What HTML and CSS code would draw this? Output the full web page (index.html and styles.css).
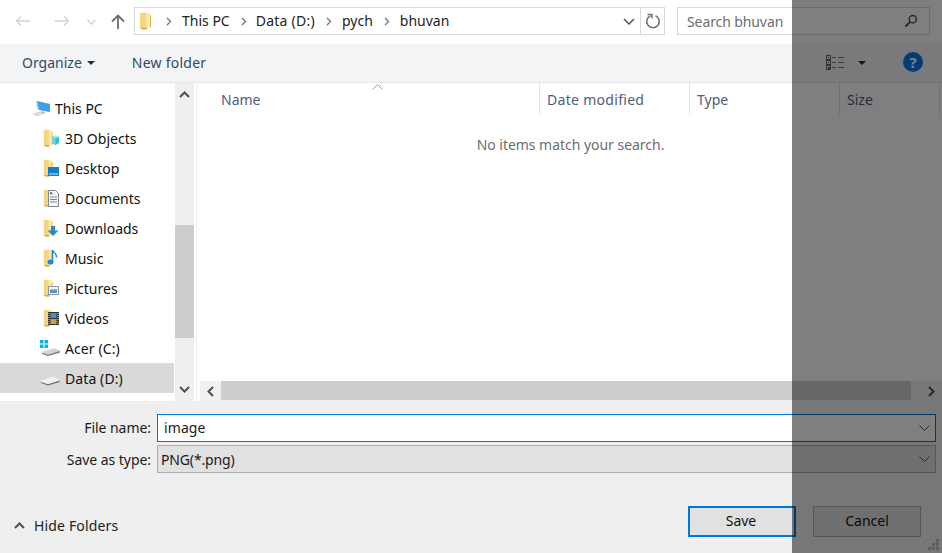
FILE: index.html
```html
<!DOCTYPE html>
<html lang="en">
<head>
<meta charset="utf-8">
<title>Save As</title>
<link rel="stylesheet" href="styles.css">
</head>
<body>
<svg class="defs" width="0" height="0">
  <defs>
    <g id="folder">
      <path d="M1 1h6l1 2v19H3l-2-2z" fill="#f5d67e"/>
      <path d="M7 1h3l2 3v16H7z" fill="#fbe7a6"/>
      <path d="M1 20l2 2h5v-2z" fill="#d8a93f"/>
      <path d="M12 4v15h-1V4z" fill="#e2b752"/>
    </g>
  </defs>
</svg>
<div class="dialog">
  <div class="topbar">
    <svg class="navicon back" width="16" height="12" viewBox="0 0 16 12"><path d="M15 6H2M6 1.500 1.500 6 6 10.500" fill="none" stroke="#d3d3d3" stroke-width="1.400"/></svg>
    <svg class="navicon forward" width="16" height="12" viewBox="0 0 16 12"><path d="M1 6h13M10 1.500 14.500 6 10 10.500" fill="none" stroke="#d3d3d3" stroke-width="1.400"/></svg>
    <svg class="navicon down" width="9" height="6" viewBox="0 0 9 6"><path d="M.5 1l4 4 4-4" fill="none" stroke="#d3d3d3" stroke-width="1.300"/></svg>
    <svg class="navicon up" width="14" height="15" viewBox="0 0 14 15"><path d="M7 15V2M1 7.500 7 1.500l6 6" fill="none" stroke="#6d6d6d" stroke-width="1.800"/></svg>
    <div class="address">
      <svg class="crumb-folder" width="13" height="18" viewBox="0 0 13 23" preserveAspectRatio="none"><use href="#folder"/></svg>
      <div class="crumbs">
        <svg class="sep" width="6" height="9" viewBox="0 0 6 9"><path d="M1 1l3.500 3.500L1 8" fill="none" stroke="#777" stroke-width="1.400"/></svg>
        <span>This PC</span>
        <svg class="sep" width="6" height="9" viewBox="0 0 6 9"><path d="M1 1l3.500 3.500L1 8" fill="none" stroke="#777" stroke-width="1.400"/></svg>
        <span>Data (D:)</span>
        <svg class="sep" width="6" height="9" viewBox="0 0 6 9"><path d="M1 1l3.500 3.500L1 8" fill="none" stroke="#777" stroke-width="1.400"/></svg>
        <span>pych</span>
        <svg class="sep" width="6" height="9" viewBox="0 0 6 9"><path d="M1 1l3.500 3.500L1 8" fill="none" stroke="#777" stroke-width="1.400"/></svg>
        <span>bhuvan</span>
      </div>
      <svg class="addr-drop" width="12" height="7" viewBox="0 0 12 7"><path d="M1 1l5 5 5-5" fill="none" stroke="#555" stroke-width="1.500"/></svg>
      <div class="refresh">
        <svg width="16" height="16" viewBox="0 0 16 16"><path d="M5.500 2.700A6.300 6.300 0 1 0 10.500 2.700" fill="none" stroke="#757575" stroke-width="1.600"/><path d="M2.500 1.500h4.500v4" fill="none" stroke="#757575" stroke-width="1.500"/></svg>
      </div>
    </div>
    <div class="search">
      <span class="search-text">Search bhuvan</span>
      <svg width="14" height="14" viewBox="0 0 14 14"><circle cx="8.800" cy="5.200" r="3.600" fill="none" stroke="#555" stroke-width="1.500"/><path d="M6 8 1.500 12.500" stroke="#555" stroke-width="2.200"/></svg>
    </div>
  </div>

  <div class="toolbar">
    <button class="tool organize">Organize<span class="caret"></span></button>
    <button class="tool newfolder">New folder</button>
    <div class="tool-right">
      <svg class="views" width="19" height="15" viewBox="0 0 19 15">
        <g fill="#f2f2f2" stroke="#666"><rect x=".5" y=".5" width="4" height="4"/><rect x=".5" y="5.500" width="4" height="4"/><rect x=".5" y="10.500" width="4" height="4"/></g>
        <rect x="2" y="12" width="2" height="2" fill="#c0392b"/>
        <rect x="2" y="2" width="1" height="1" fill="#444"/><rect x="2" y="7" width="1" height="1" fill="#444"/>
        <path d="M6 2.500h4M12 2.500h6M6 7.500h4M12 7.500h6M6 12.500h4M12 12.500h6" stroke="#777"/>
      </svg>
      <span class="caret views-caret"></span>
      <span class="help">?</span>
    </div>
  </div>

  <div class="main">
    <nav class="tree">
      <div class="tree-list">
        <div class="row level0">
          <svg class="icon pc" width="20" height="17" viewBox="0 0 20 17">
            <path d="M6 1l13 3v8L8 10z" fill="#3aa0e8"/><path d="M6 1 8 10l-1.500-.5L5 1.500z" fill="#8cc9ef"/>
            <path d="M1 13.500l9-2 3 2-7 3z" fill="#d9d9d9"/><path d="M10 11l4 1v1.500l-3 0z" fill="#bdbdbd"/>
          </svg>
          <span>This PC</span>
        </div>
        <div class="row level1">
          <svg class="icon" width="16" height="18" viewBox="0 0 16 18"><g transform="scale(.8)"><use href="#folder"/></g><path d="M9 8l3.500-1.500L16 8v6l-3.500 2L9 14z" fill="#39bcd0"/><path d="M9 8l3.500 1.500L16 8l-3.500-1.500z" fill="#a8e8ef"/><path d="M12.500 9.500V16L9 14V8z" fill="#6fd5e2"/></svg>
          <span>3D Objects</span>
        </div>
        <div class="row level1">
          <svg class="icon" width="16" height="18" viewBox="0 0 16 18"><g transform="scale(.8)"><use href="#folder"/></g><rect x="5" y="8" width="11" height="9" fill="#0f7fd1"/><path d="M6 14.500h9v1H6z" fill="#bfe3f8"/></svg>
          <span>Desktop</span>
        </div>
        <div class="row level1">
          <svg class="icon" width="16" height="18" viewBox="0 0 16 18"><g transform="scale(.8)"><use href="#folder"/></g><path d="M5.500 1.500h7l3 3v13h-10z" fill="#f7f7f7" stroke="#7b8894"/><path d="M7 5h3M7 8h7M7 10.500h7M7 13h7" stroke="#7b8894"/><rect x="7" y="3" width="2" height="2" fill="#3b8ec9"/></svg>
          <span>Documents</span>
        </div>
        <div class="row level1">
          <svg class="icon" width="16" height="18" viewBox="0 0 16 18"><g transform="scale(.8)"><use href="#folder"/></g><path d="M8 7h4v4.500h3.500L10 17 4.500 11.500H8z" fill="#2d88d4"/></svg>
          <span>Downloads</span>
        </div>
        <div class="row level1">
          <svg class="icon" width="16" height="18" viewBox="0 0 16 18"><g transform="scale(.8)"><use href="#folder"/></g><path d="M9.500 1v11.500" stroke="#1c8ce0" stroke-width="1.600"/><ellipse cx="7.500" cy="13" rx="3" ry="2.500" fill="#1c8ce0"/><path d="M9.500 1c1 3 4.500 3.500 4 7.500" fill="none" stroke="#1c8ce0" stroke-width="1.400"/></svg>
          <span>Music</span>
        </div>
        <div class="row level1">
          <svg class="icon" width="16" height="18" viewBox="0 0 16 18"><g transform="scale(.8)"><use href="#folder"/></g><rect x="5.500" y="7.500" width="10" height="8" fill="#eef3f7" stroke="#8d9aa5"/><path d="M7 10.500h7v3.500H7z" fill="#5c97c4"/></svg>
          <span>Pictures</span>
        </div>
        <div class="row level1">
          <svg class="icon" width="16" height="18" viewBox="0 0 16 18"><g transform="scale(.8)"><use href="#folder"/></g><rect x="5" y="3" width="11" height="13" fill="#333"/><rect x="7.500" y="4" width="6" height="5" fill="#4d8fc4"/><rect x="7.500" y="10" width="6" height="5" fill="#c9a14a"/><path d="M6 4v11M15 4v11" stroke="#ddd" stroke-dasharray="1 1"/></svg>
          <span>Videos</span>
        </div>
        <div class="row level1 drive">
          <svg class="icon" width="20" height="16" viewBox="0 0 20 16"><path d="M0 0h3.500v3.500H0zM4.500 0H8v3.500H4.500zM0 4.500h3.500V8H0zM4.500 4.500H8V8H4.500z" fill="#0cb4ee"/><path d="M2 12l12-4 6 2.500v2L8 16l-6-2z" fill="#d4d4d4"/><path d="M2 13l6 1.800 12-3.800v1.500L8 16l-6-2z" fill="#7e7e7e"/></svg>
          <span>Acer (C:)</span>
        </div>
        <div class="row level1 drive selected">
          <svg class="icon" width="20" height="16" viewBox="0 0 20 16"><path d="M1 10.500l12-4 6.500 3v2L8 15.500l-7-2.500z" fill="#efefef"/><path d="M1 12l7 2.300 11.500-3.800v1.500L8 15.500 1 13z" fill="#6e6e6e"/></svg>
          <span>Data (D:)</span>
        </div>
      </div>
      <div class="vscroll">
        <button class="sb-btn"><svg width="11" height="7" viewBox="0 0 11 7"><path d="M1 6l4.500-4.500L10 6" fill="none" stroke="#505050" stroke-width="2"/></svg></button>
        <div class="v-track"><div class="v-thumb"></div></div>
        <button class="sb-btn"><svg width="11" height="7" viewBox="0 0 11 7"><path d="M1 1l4.500 4.500L10 1" fill="none" stroke="#505050" stroke-width="2"/></svg></button>
      </div>
    </nav>
    <section class="files">
      <div class="headers">
        <svg class="sort" width="11" height="6" viewBox="0 0 11 6"><path d="M.5 5.500l5-5 5 5" fill="none" stroke="#9a9a9a"/></svg>
        <div class="col col-name">Name</div>
        <div class="col col-mid col-date">Date modified</div>
        <div class="col col-mid">Type</div>
        <div class="col col-size">Size</div>
      </div>
      <div class="empty">No items match your search.</div>
      <div class="hscroll">
        <button class="sb-btn h"><svg width="7" height="11" viewBox="0 0 7 11"><path d="M6 1 1.500 5.500 6 10" fill="none" stroke="#505050" stroke-width="2"/></svg></button>
        <div class="h-thumb"></div>
        <button class="sb-btn h end"><svg width="7" height="11" viewBox="0 0 7 11"><path d="M1 1l4.500 4.500L1 10" fill="none" stroke="#505050" stroke-width="2"/></svg></button>
      </div>
    </section>
  </div>

  <div class="bottom">
    <div class="field-row first">
      <label class="field-label">File name:</label>
      <div class="field input-field"><span>image</span><svg width="11" height="6" viewBox="0 0 11 6"><path d="M.5.500l5 5 5-5" fill="none" stroke="#555"/></svg></div>
    </div>
    <div class="field-row">
      <label class="field-label">Save as type:</label>
      <div class="field select-field"><span>PNG(*.png)</span><svg width="11" height="6" viewBox="0 0 11 6"><path d="M.5.500l5 5 5-5" fill="none" stroke="#555"/></svg></div>
    </div>
    <div class="actions">
      <div class="hide-folders">
        <svg width="11" height="7" viewBox="0 0 11 7"><path d="M1 6l4.500-4.500L10 6" fill="none" stroke="#505050" stroke-width="2"/></svg>
        <span>Hide Folders</span>
      </div>
      <div class="buttons">
        <button class="btn primary">Save</button>
        <button class="btn">Cancel</button>
      </div>
    </div>
    <div class="grip"><svg width="12" height="12" viewBox="0 0 12 12"><path d="M8 0h3v3H8zM4 4h3v3H4zM8 4h3v3H8zM0 8h3v3H0zM4 8h3v3H4zM8 8h3v3H8z" fill="#bbb"/></svg></div>
  </div>

  <div class="shade"></div>
</div>
</body>
</html>
```
FILE: styles.css
```css
* { box-sizing: border-box; }
html, body { margin: 0; padding: 0; }
body { width: 942px; height: 553px; overflow: hidden; background: #fff; font-family: "Noto Sans", "Open Sans", sans-serif; font-size: 14px; color: #1a1a1a; }
.defs { position: absolute; }
button { font: inherit; color: inherit; background: none; border: 0; padding: 0; }
.dialog { position: relative; width: 942px; height: 553px; display: flex; flex-direction: column; overflow: hidden; }

.topbar { height: 44px; flex: none; display: flex; align-items: flex-start; padding-top: 7px; background: #fff; }
.navicon { flex: none; margin-top: 8px; }
.back { margin-left: 15px; }
.forward { margin-left: 23px; }
.down { margin-left: 17px; margin-top: 12px; }
.up { margin-left: 15px; margin-top: 7px; }
.address { margin-left: 9px; width: 531px; height: 28px; border: 1px solid #d9d9d9; display: flex; align-items: center; }
.crumb-folder { margin-left: 4px; flex: none; }
.crumbs { display: flex; align-items: center; margin-left: 14px; color: #222; flex: 1; }
.crumbs span { line-height: 20px; }
.crumbs span:nth-of-type(2) { letter-spacing: .25px; margin-left: -1px; }
.crumbs .sep { flex: none; margin: 0 10px 0 11px; }
.crumbs .sep:first-child { margin: 0 10px 0 0; }
.addr-drop { flex: none; margin-right: 5px; }
.refresh { width: 24px; height: 26px; border-left: 1px solid #d9d9d9; display: flex; align-items: center; justify-content: center; }
.search { margin-left: 12px; width: 253px; height: 28px; border: 1px solid #d9d9d9; display: flex; align-items: center; justify-content: space-between; padding: 0 11px 0 9px; color: #6d6d6d; }
.search-text { letter-spacing: -.1px; }

.toolbar { height: 39px; flex: none; display: flex; align-items: center; background: #f3f4f6; border-bottom: 1px solid #e6e6e6; color: #2e4a66; padding-left: 22px; padding-bottom: 1px; }
.organize { display: flex; align-items: center; }
.caret { display: inline-block; width: 0; height: 0; border-left: 4.500px solid transparent; border-right: 4.500px solid transparent; border-top: 4.500px solid #222c38; margin-left: 5px; }
.newfolder { margin-left: 37px; letter-spacing: .25px; }
.tool-right { margin-left: auto; display: flex; align-items: center; padding-right: 19px; }
.views-caret { margin-left: 13px; }
.help { width: 20px; height: 20px; margin-left: 37px; margin-top: -1px; border-radius: 50%; background: #0a78e6; color: #fff; font-weight: 700; font-size: 15px; line-height: 20px; text-align: center; }

.main { height: 318px; flex: none; display: flex; background: #fff; }
.tree { width: 197px; flex: none; display: flex; border-right: 1px solid #efefef; }
.tree-list { width: 174px; padding-top: 10px; flex: none; color: #111; }
.row { height: 30px; display: flex; align-items: center; }
.row.selected { background: #d9d9d9; }
.level0 { padding-left: 31px; }
.level0 span { margin-left: 4px; }
.level1 { padding-left: 43px; }
.level1 span { margin-left: 6px; }
.icon { flex: none; }
.drive { padding-left: 40px; }
.drive span { margin-left: 5px; letter-spacing: .1px; }
.vscroll { width: 19px; margin-left: 1px; display: flex; flex-direction: column; background: #efefef; }
.sb-btn { height: 23px; flex: none; width: 100%; display: flex; align-items: center; justify-content: center; }
.v-track { flex: 1; padding-top: 119px; padding-bottom: 40px; display: flex; }
.v-thumb { flex: 1; background: #cdcdcd; }

.files { flex: 1; min-width: 0; margin-left: 3px; position: relative; display: flex; flex-direction: column; }
.headers { height: 32px; flex: none; display: flex; color: #4c607a; }
.sort { position: absolute; left: 172px; top: 1px; }
.col { border-right: 1px solid #e5e5e5; padding: 7px 0 0 7px; height: 32px; }
.col-name { width: 340px; padding-left: 21px; }
.col-mid { width: 150px; }
.col-date { letter-spacing: .3px; }
.col-size { width: 100px; }
.empty { flex: 1; text-align: center; color: #6d6d6d; padding-top: 20px; width: 741px; letter-spacing: -.03px; }
.hscroll { height: 20px; flex: none; display: flex; background: #f0f0f0; }
.sb-btn.h { width: 21px; height: 100%; }
.sb-btn.end { margin-left: auto; }
.h-thumb { width: 690px; height: 19px; background: #cdcdcd; }

.bottom { flex: 1; background: #efefef; position: relative; display: flex; flex-direction: column; padding-top: 13px; }
.field-row { display: flex; align-items: center; height: 28px; margin-bottom: 3px; }
.field-label { width: 151px; text-align: right; flex: none; color: #1a1a1a; letter-spacing: -.05px; }
.first .field-label { margin-top: -2px; }
.first .field span { margin-top: -2px; letter-spacing: .1px; }
.field { margin-left: 6px; width: 779px; height: 28px; border: 1px solid #adadad; display: flex; align-items: center; justify-content: space-between; padding: 0 5px 0 6px; }
.input-field { background: #fff; border-color: #0078d7; }
.select-field { background: #e1e1e1; padding-left: 3px; }
.select-field span { letter-spacing: -.15px; }
.actions { display: flex; justify-content: space-between; margin-top: 30px; height: 31px; align-items: flex-start; padding-left: 14px; padding-right: 21px; }
.hide-folders { display: flex; align-items: center; gap: 9px; color: #222; margin-top: 10px; letter-spacing: .15px; }
.buttons { display: flex; gap: 17px; }
.btn { width: 108px; height: 31px; background: #e1e1e1; border: 1px solid #adadad; color: #111; padding-bottom: 3px; }
.btn.primary { border: 2px solid #0078d7; padding-right: 2px; }
.grip { position: absolute; right: 2px; bottom: 2px; display: flex; }

.shade { position: absolute; left: 792px; top: 0; width: 150px; height: 553px; background: rgba(0, 0, 0, .5); }
```
